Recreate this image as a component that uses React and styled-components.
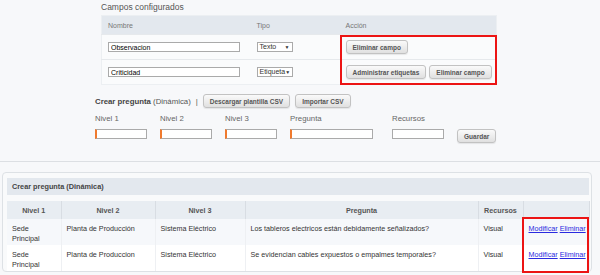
import styled, { createGlobalStyle } from "styled-components";

const GlobalStyle = createGlobalStyle`
    body {
        margin: 0;
        background: #f7f8fa;
        font-family: "Liberation Sans", Arial, sans-serif;
        color: #333;
    }
`;

const Page = styled.div`
    width: 600px;
    height: 275px;
    overflow: hidden;
`;

const TopSection = styled.section`
    padding: 2px 0 0 95px;
    height: 162px;
    box-sizing: border-box;
    border-bottom: 1px solid #dcdfe3;
`;

const CamposBlock = styled.div`
    margin-left: 6px;
    width: 396px;
`;

const Caption = styled.div`
    font-size: 8.5px;
    color: #555;
    height: 13px;
    line-height: 10px;
`;

const FieldsTable = styled.table`
    width: 100%;
    table-layout: fixed;
    border-collapse: collapse;
    background: #fafbfc;
    border: 1px solid #eceff2;
    font-size: 7px;

    th {
        background: #e3e8ee;
        color: #777;
        font-weight: normal;
        text-align: left;
        height: 18px;
        padding: 0 6px;
    }

    td {
        height: 24px;
        padding: 0 6px;
        border-top: 1px solid #e6e9ec;
        white-space: nowrap;
    }
`;

const ActionCell = styled.td`
    position: relative;
`;

const Highlight = styled.div`
    position: absolute;
    left: 0;
    top: ${(p) => (p.$first ? "0" : "-1px")};
    right: -1px;
    bottom: ${(p) => (p.$first ? "0" : "-1px")};
    border: 2px solid #ec1414;
    border-top-width: ${(p) => (p.$first ? "2px" : "0")};
    border-bottom-width: ${(p) => (p.$first ? "0" : "2px")};
    pointer-events: none;
`;

const ActionsBox = styled.div`
    position: relative;
    display: flex;
    gap: 3px;
`;

const TextInput = styled.input`
    box-sizing: border-box;
    width: ${(p) => p.$w || 52}px;
    height: 10px;
    border: 1px solid #aaa;
    border-left: ${(p) => (p.$accent ? "2px solid #f07a2e" : "1px solid #aaa")};
    background: #fff;
    font-family: inherit;
    font-size: 7px;
    padding: 0 2px;
    margin: 0;
    outline: none;
    display: block;
`;

const FakeSelect = styled.div`
    box-sizing: border-box;
    width: 36px;
    height: 10px;
    border: 1px solid #aaa;
    background: #fff;
    font-size: 7px;
    line-height: 8px;
    padding-left: 2px;
    display: flex;
    justify-content: space-between;
    align-items: center;
    overflow: hidden;

    span:last-child {
        font-size: 5px;
        padding-right: 2px;
    }
`;

const Btn = styled.button`
    height: ${(p) => p.$h || 14}px;
    padding: 0 6px;
    font-family: inherit;
    font-size: 6.5px;
    font-weight: bold;
    color: #555;
    white-space: nowrap;
    background: linear-gradient(#fafafa, #e0e0e0);
    border: 1px solid #c2c2c2;
    border-radius: 3px;
    box-shadow: 0 1px 1px rgba(0, 0, 0, 0.08);
    cursor: pointer;
`;

const CreateRow = styled.div`
    display: flex;
    align-items: center;
    margin-top: 9px;
    height: 14px;
    font-size: 7.8px;
    color: #555;
    gap: 5px;

    b {
        color: #444;
    }
`;

const FormRow = styled.div`
    display: flex;
    align-items: flex-end;
    gap: 13px;
    margin-top: 6px;
`;

const Field = styled.label`
    display: flex;
    flex-direction: column;
    gap: 6px;
    font-size: 7.8px;
    color: #666;
    margin-left: ${(p) => p.$push || 0}px;
`;

const LowerSection = styled.section`
    padding: 10px 8px 0 2px;
`;

const Card = styled.div`
    border: 1px solid #dde1e5;
    border-radius: 4px;
    background: #f9fafb;
    padding: 5px 2px 0 4px;
`;

const CardHeader = styled.div`
    background: #e3e8ee;
    height: 17px;
    line-height: 17px;
    padding-left: 5px;
    font-size: 7.3px;
    font-weight: bold;
    color: #444;
`;

const DataTable = styled.table`
    margin-top: 6px;
    width: 583px;
    table-layout: fixed;
    border-collapse: collapse;
    font-size: 7.2px;
    color: #333;

    th {
        background: #e8edf2;
        height: 18px;
        font-weight: bold;
        color: #555;
        border-right: 1px solid #d8dde3;
        text-align: center;
        padding: 0;
    }

    td {
        vertical-align: top;
        padding: 5px 5px 0;
        height: 21px;
        line-height: 10px;
        border-right: 1px solid #eef0f3;
    }

    tbody tr:nth-child(odd) td {
        background: #f6f8fb;
    }

    tbody tr:nth-child(even) td {
        background: #fff;
    }
`;

const LinkCell = styled.td`
    position: relative;
    white-space: nowrap;

    a {
        position: relative;
        color: #2a2ae0;
        text-decoration: underline;
        margin-right: 2px;
    }
`;

const RowHighlight = styled.div`
    position: absolute;
    left: -2px;
    right: 0;
    top: ${(p) => (p.$first ? "-2px" : "0")};
    bottom: ${(p) => (p.$first ? "0" : "-2px")};
    border: 2px solid #ec1414;
    border-top-width: ${(p) => (p.$first ? "2px" : "0")};
    border-bottom-width: ${(p) => (p.$first ? "0" : "2px")};
    pointer-events: none;
`;

const rows = [
    ["Sede Principal", "Planta de Producción", "Sistema Eléctrico", "Los tableros electricos están debidamente señalizados?", "Visual"],
    ["Sede Principal", "Planta de Produccion", "Sistema Eléctrico", "Se evidencian cables expuestos o empalmes temporales?", "Visual"],
];

export default function App() {
    return (
        <Page>
            <GlobalStyle />
            <TopSection>
                <CamposBlock>
                    <Caption>Campos configurados</Caption>
                    <FieldsTable>
                        <colgroup>
                            <col style={{ width: 149 }} />
                            <col style={{ width: 89 }} />
                            <col />
                        </colgroup>
                        <thead>
                            <tr>
                                <th>Nombre</th>
                                <th>Tipo</th>
                                <th>Acción</th>
                            </tr>
                        </thead>
                        <tbody>
                            <tr>
                                <td><TextInput $w={132} defaultValue="Observacion" /></td>
                                <td><FakeSelect><span>Texto</span><span>▼</span></FakeSelect></td>
                                <ActionCell>
                                    <Highlight $first />
                                    <ActionsBox>
                                        <Btn>Eliminar campo</Btn>
                                    </ActionsBox>
                                </ActionCell>
                            </tr>
                            <tr>
                                <td><TextInput $w={132} defaultValue="Criticidad" /></td>
                                <td><FakeSelect><span>Etiqueta</span><span>▼</span></FakeSelect></td>
                                <ActionCell>
                                    <Highlight />
                                    <ActionsBox>
                                        <Btn>Administrar etiquetas</Btn>
                                        <Btn>Eliminar campo</Btn>
                                    </ActionsBox>
                                </ActionCell>
                            </tr>
                        </tbody>
                    </FieldsTable>
                </CamposBlock>
                <CreateRow>
                    <span><b>Crear pregunta</b> (Dinámica)</span>
                    <span>|</span>
                    <Btn>Descargar plantilla CSV</Btn>
                    <Btn>Importar CSV</Btn>
                </CreateRow>
                <FormRow>
                    <Field>Nivel 1<TextInput $accent /></Field>
                    <Field>Nivel 2<TextInput $accent /></Field>
                    <Field>Nivel 3<TextInput $accent /></Field>
                    <Field>Pregunta<TextInput $accent $w={83} /></Field>
                    <Field $push={6}>Recursos<TextInput /></Field>
                    <Btn style={{ marginBottom: -4 }}>Guardar</Btn>
                </FormRow>
            </TopSection>
            <LowerSection>
                <Card>
                    <CardHeader>Crear pregunta (Dinámica)</CardHeader>
                    <DataTable>
                        <colgroup>
                            <col style={{ width: 54 }} />
                            <col style={{ width: 94 }} />
                            <col style={{ width: 90 }} />
                            <col style={{ width: 233 }} />
                            <col style={{ width: 45 }} />
                            <col />
                        </colgroup>
                        <thead>
                            <tr>
                                <th>Nivel 1</th>
                                <th>Nivel 2</th>
                                <th>Nivel 3</th>
                                <th>Pregunta</th>
                                <th>Recursos</th>
                                <th></th>
                            </tr>
                        </thead>
                        <tbody>
                            {rows.map((r, i) => (
                                <tr key={i}>
                                    {r.map((c, j) => (
                                        <td key={j}>{c}</td>
                                    ))}
                                    <LinkCell>
                                        <RowHighlight $first={i === 0} />
                                        <a href="#">Modificar</a>
                                        <a href="#">Eliminar</a>
                                    </LinkCell>
                                </tr>
                            ))}
                        </tbody>
                    </DataTable>
                </Card>
            </LowerSection>
        </Page>
    );
}
